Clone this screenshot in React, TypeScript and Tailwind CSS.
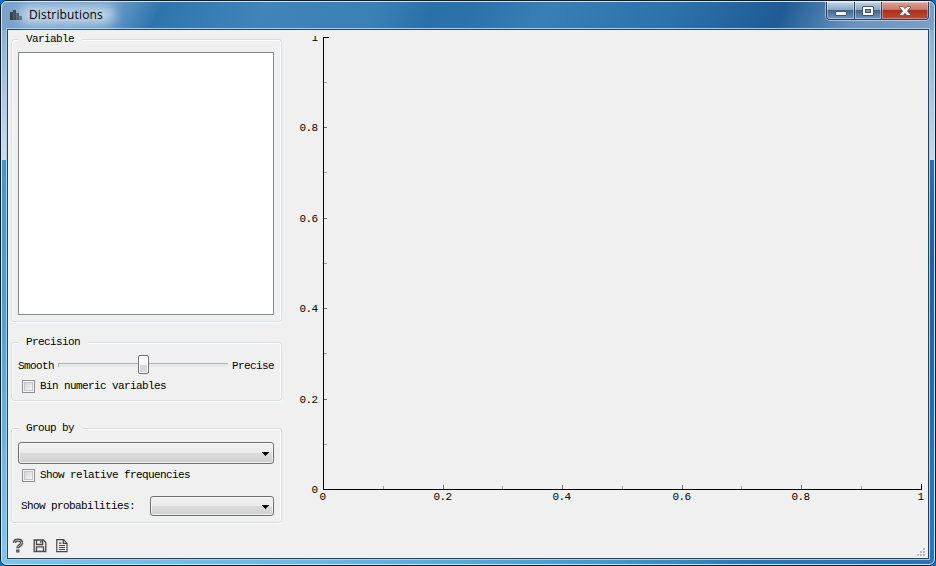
import type { ReactNode } from "react";

function Group({ title, className, children }: { title: string; className: string; children: ReactNode }) {
  return (
    <fieldset
      className={`w-[271px] shrink-0 min-w-0 rounded-[3px] border border-[#d5dfe5] px-1.5 shadow-[inset_1px_1px_0_#fff,inset_-1px_0_0_#fff,0_1px_0_#fff] ${className}`}
    >
      <legend className="h-[15px] bg-[#f0f0f0] px-[8px] leading-[15px]">{title}</legend>
      {children}
    </fieldset>
  );
}

function Checkbox({ label }: { label: string }) {
  return (
    <label className="ml-1 flex h-[13px] items-center gap-[5px] leading-[13px]">
      <span className="flex size-[13px] items-center justify-center border border-[#8e8f8f] bg-[#f4f4f4]">
        <span className="size-[9px] border border-[#c3c7cd] bg-linear-to-br from-[#d0d4da] to-[#f7f7f7]" />
      </span>
      <span>{label}</span>
    </label>
  );
}

function Combo({ className }: { className: string }) {
  return (
    <div
      className={`flex items-center justify-end rounded-[3px] border border-[#707070] bg-[linear-gradient(#f2f2f2_0%,#ebebeb_48%,#dddddd_50%,#cfcfcf_100%)] pr-1 shadow-[inset_0_0_0_1px_#f8f8f8cc] ${className}`}
    >
      <svg width="7" height="4" className="mt-0.5" shapeRendering="crispEdges">
        <path d="M0 0h7v1H6v1H5v1H4v1H3V3H2V2H1V1H0z" fill="#000" />
      </svg>
    </div>
  );
}

const yLabels: [string, number][] = [["0.8", 127], ["0.6", 218], ["0.4", 308], ["0.2", 399], ["0", 489]];
const xLabels: [string, number][] = [["0", 323], ["0.2", 443], ["0.4", 562], ["0.6", 682], ["0.8", 801], ["1", 921]];

function Chart() {
  return (
    <svg width="640" height="528" viewBox="288 30 640 528" className="block">
      <g shapeRendering="crispEdges">
        {[82, 172, 263, 353, 444].map((y) => (
          <rect key={y} x="324" y={y} width="3" height="1" fill="#a0a0a0" />
        ))}
        {[127, 218, 308, 399].map((y) => (
          <rect key={y} x="324" y={y} width="3" height="1" fill="#707070" />
        ))}
        {[383, 502, 622, 741, 861].map((x) => (
          <rect key={x} x={x} y="486" width="1" height="3" fill="#a0a0a0" />
        ))}
        {[443, 562, 682, 801].map((x) => (
          <rect key={x} x={x} y="485" width="1" height="4" fill="#707070" />
        ))}
        <path d="M323 37h6v1h-5v451h597v-5h1v6H323z" fill="#000" />
      </g>
      <g fontSize="11" fill="#000">
        <svg x="308" y="36" width="12" height="8" viewBox="308 36 12 8">
          <text x="317.5" y="41" textAnchor="end">1</text>
        </svg>
        {yLabels.map(([t, y]) => (
          <text key={t} x="317.5" y={y + 4} textAnchor="end">{t}</text>
        ))}
        {xLabels.map(([t, x]) => (
          <text key={t} x={x - 0.5} y="500" textAnchor="middle">{t}</text>
        ))}
      </g>
    </svg>
  );
}

function TitleBar() {
  return (
    <div className="flex h-[26px] shrink-0 items-start pl-[8px]">
      <svg width="12" height="10" className="mt-2 shrink-0" shapeRendering="crispEdges">
        <path d="M0 2h3v8H0zM3 0h3v10H3zM6 3h3v7H6zM9 6h3v4H9z" fill="#303b45" />
        <path d="M3 2v8M6 3v7M9 6v4" stroke="#4e5d6a" strokeWidth="1" />
      </svg>
      <h1 className="relative ml-[7px] mt-[4px] text-[12px] leading-[18px] font-normal tracking-[0.15px] text-black font-['Open_Sans','Noto_Sans',sans-serif]">
        <span className="absolute -inset-x-2.5 inset-y-0 rounded-full bg-white/60 blur-[6px]" />
        <span className="relative inline-block w-[76px] whitespace-nowrap">Distributions</span>
      </h1>
      <div className="ml-auto mr-[5px] flex h-[18px] w-[103px] overflow-hidden rounded-b-[4px] border border-t-0 border-[#29405e] shadow-[0_0_0_1px_#ffffff77]">
        <button className="flex w-[28px] items-center justify-center border-r border-[#29405e] bg-[linear-gradient(#c0d2e4_0%,#8ba9c8_44%,#406690_48%,#7197c0_100%)] pt-1.5 shadow-[inset_0_0_0_1px_#ffffff66]">
          <span className="h-[5px] w-[12px] rounded-[1px] border border-[#44536a] bg-white" />
        </button>
        <button className="flex w-[27px] items-center justify-center border-r border-[#29405e] bg-[linear-gradient(#c0d2e4_0%,#8ba9c8_44%,#406690_48%,#7197c0_100%)] shadow-[inset_0_0_0_1px_#ffffff66]">
          <span className="flex h-[10px] w-[12px] items-center justify-center rounded-[1px] border border-[#44536a] bg-white">
            <span className="h-[4px] w-[6px] border border-[#44536a] bg-[#7798bd]" />
          </span>
        </button>
        <button className="flex flex-1 items-center justify-center bg-[linear-gradient(#dfa292_0%,#cc7769_44%,#ad2c17_48%,#b94e36_100%)] shadow-[inset_0_0_0_1px_#ffffff55]">
          <svg width="12" height="10" viewBox="0 0 12 10">
            <path d="M.5.5h3.6L6 2.7 7.9.5h3.6v1L8.4 5l3.1 3.5v1H7.9L6 7.3 4.1 9.5H.5v-1L3.6 5 .5 1.5z" fill="#fff" stroke="#554858" strokeWidth=".8" />
          </svg>
        </button>
      </div>
    </div>
  );
}

export default function App() {
  return (
    <div className="h-[566px] w-[936px] overflow-hidden bg-[#0877c7] text-[11px] tracking-[-0.6px] text-black font-['Liberation_Mono',monospace]">
      <div className="h-full rounded-[7px] border border-[#101d2e] bg-[linear-gradient(90deg,#78c5ee_0%,#68b7e4_35%,#4299cf_65%,#2b78b8_80%,#2973b6_100%)]">
        <div className="flex h-full flex-col rounded-[6px] border border-[#c9e5f5] bg-[linear-gradient(115deg,#7ba4cc_0%,#689bc9_12%,#2f75ad_17%,#4084b9_28%,#3b80b5_40%,#2a70a9_46%,#2c71aa_50%,#397fb5_58%,#2c71aa_72%,#1f5b94_83%,#6992be_91%,#7e9fc5_100%),linear-gradient(#8bb1d4_0%,#cfe0ec_100%),linear-gradient(#8bb1d4_0%,#c9d9e8_100%),linear-gradient(#4298c9_0%,#4ba4d5_40%,#7cc8ef_100%),linear-gradient(#2d70ae_0%,#2060a0_25%,#2c79bb_100%)] bg-[size:100%_28px,5px_130px,6px_130px,5px_390px,6px_390px] bg-[position:0_0,0_28px,100%_28px,0_158px,100%_158px] bg-no-repeat">
          <TitleBar />
          <main className="mx-1 mb-1 flex h-[532px] shrink-0 border border-[#a8cce2]">
            <div className="flex flex-1 border border-[#27455c] bg-[#f0f0f0]">
              <div className="flex w-[280px] flex-col pl-[3px] pt-[2px]">
                <Group title="Variable" className="h-[290px]">
                  <div className="mt-[5px] h-[263px] w-[256px] border border-[#828790] bg-white" />
                </Group>
                <Group title="Precision" className="mt-[13px] h-[66px]">
                  <div className="mt-[6px] flex h-[20px] items-center leading-[20px]">
                    <span className="w-[40px] whitespace-nowrap">Smooth</span>
                    <div className="relative h-[4px] w-[170px] -translate-y-px border-t border-l border-[#b0b0b0] bg-[#e7eaea]">
                      <span className="absolute -top-[9px] left-[79px] h-[19px] w-[11px] rounded-[2px] border border-[#707070] bg-[linear-gradient(#f6f6f6_50%,#d7d7d7_51%,#d5d5d5_100%)] shadow-[inset_0_0_0_1px_#fff]" />
                    </div>
                    <span className="ml-[4px] whitespace-nowrap">Precise</span>
                  </div>
                  <div className="mt-[4px]"><Checkbox label="Bin numeric variables" /></div>
                </Group>
                <Group title="Group by" className="mt-[20px] h-[102px]">
                  <Combo className="mt-[6px] h-[22px] w-[256px]" />
                  <div className="mt-[5px]"><Checkbox label="Show relative frequencies" /></div>
                  <div className="mt-[14px] flex h-[20px] items-center justify-between pl-[3px] pr-px">
                    <span>Show probabilities:</span>
                    <Combo className="h-[20px] w-[124px]" />
                  </div>
                </Group>
                <div className="mt-[15px] flex h-[16px] gap-[9px] pl-px">
                  <svg width="12" height="16" viewBox="0 0 12 16" fill="none">
                    <path d="M2.5 5C2.5 2.9 4 2.2 6 2.2s3.6 1 3.6 2.8c0 2.6-3.8 2.3-3.8 5.3M5.8 11.5v3" stroke="#444" strokeWidth="3.2" />
                    <path d="M2.5 5C2.5 2.9 4 2.2 6 2.2s3.6 1 3.6 2.8c0 2.6-3.8 2.3-3.8 4.6M5.8 12.6v.8" stroke="#f0f0f0" strokeWidth=".8" />
                  </svg>
                  <svg width="14" height="16" viewBox="0 0 14 16" fill="none" stroke="#484848" strokeWidth="1.3">
                    <path d="M1.2 2h9.2l2.4 2.4v9.1H1.2zM3.5 2.2v4.3h6.2V2.2M3.5 13.3V8.8h7v4.5M7.8 3v2" />
                  </svg>
                  <svg width="12" height="16" viewBox="0 0 12 16" fill="none" stroke="#484848" strokeWidth="1.2">
                    <path d="M.8 1.7h6.8l3.4 3.5v8.5H.8zM7.3 2v3.3h3.5M3 5.1h2.5M3 7.5h6M3 9.5h6M3 11.5h6" />
                  </svg>
                </div>
              </div>
              <div className="relative w-[640px]">
                <Chart />
                <svg className="absolute bottom-[1px] right-[2px]" width="10" height="10" shapeRendering="crispEdges">
                  {[[7, 1], [4, 4], [7, 4], [1, 7], [4, 7], [7, 7]].map(([x, y]) => (
                    <g key={`${x}-${y}`}><rect x={x + 1} y={y + 1} width="2" height="2" fill="#fff" /><rect x={x} y={y} width="2" height="2" fill="#bcbcbc" /></g>
                  ))}
                </svg>
              </div>
            </div>
          </main>
        </div>
      </div>
    </div>
  );
}
